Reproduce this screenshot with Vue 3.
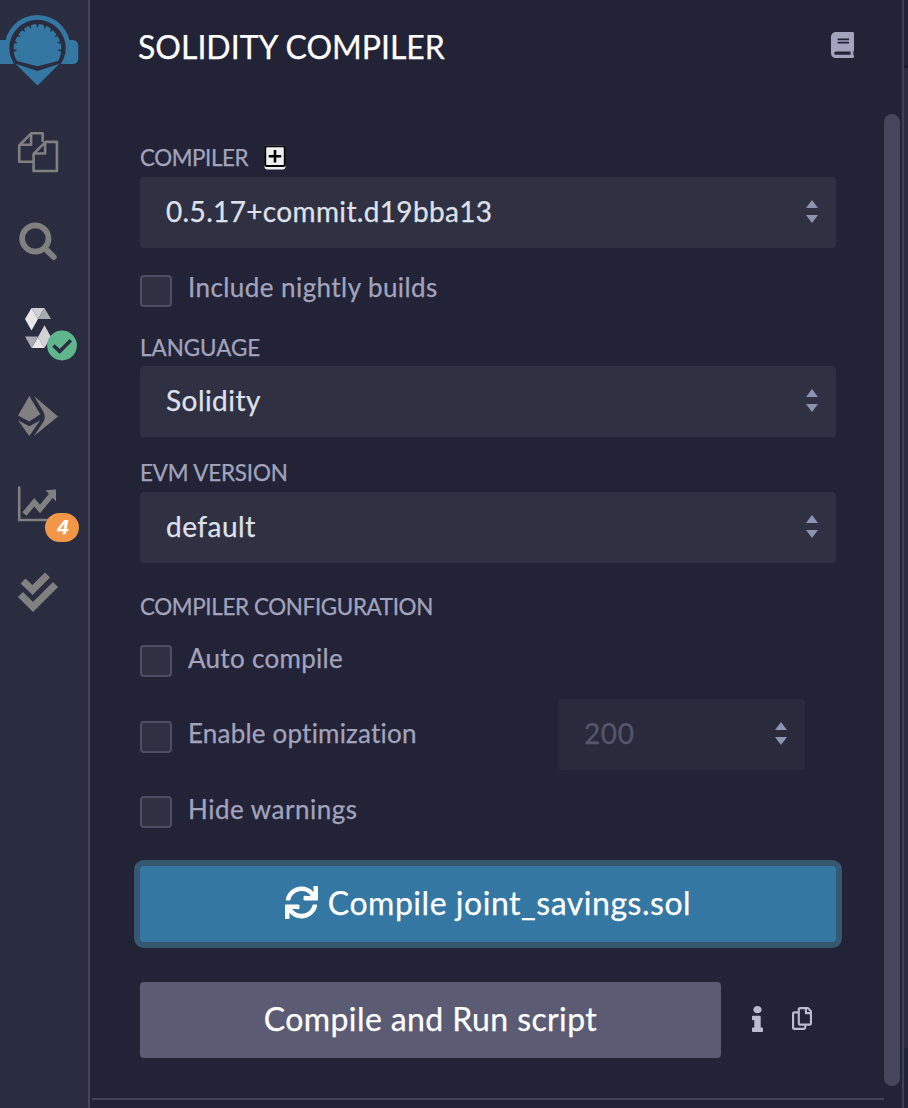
<script setup>
import { ref } from 'vue'

const compiler = ref('0.5.17+commit.d19bba13')
const language = ref('Solidity')
const evm = ref('default')
const runs = ref(200)
const notches = [-96, -76, -57, -38, -19, 0, 19, 38, 57, 76, 96].map((a) => a + 0)
</script>

<template>
  <div class="app">
    <nav class="rail">
      <svg class="logo" viewBox="0 0 88 108">
        <circle cx="37.5" cy="48" r="33" fill="#3477a2" />
        <path d="M0 64H88V90H0Z" fill="#2a2c3f" />
        <g fill="#3477a2">
          <rect x="-6" y="40" width="20" height="24" rx="5" />
          <rect x="61" y="40" width="17.3" height="24" rx="5.5" />
        </g>
        <circle cx="37.5" cy="48" r="28.2" fill="#2a2c3f" />
        <path d="M17 61C12.500 54 12.500 45 16.500 38C21 29 29 24 37.500 24S54 29 58.500 38C62.500 45 62.500 54 58 61L37.500 66.300Z" fill="#3477a2" />
        <path v-for="a in notches" :key="a" d="M35.500 22.500L37.500 27.800L39.500 22.500Z" :transform="`rotate(${a} 37.5 48)`" fill="#2a2c3f" />
        <path d="M15.500 63.800L37.500 71L59.500 63.800L37.500 85.500Z" fill="#3477a2" />
      </svg>
      <svg viewBox="0 108 88 88" fill="none" stroke="#808080" stroke-width="2.600" stroke-linejoin="round">
        <path d="M33.500 161.700H19.200V145.500L31.500 133.200H42.600V142M31.100 133.500V144.800H19.500" />
        <path d="M45.500 141.900H56.900V171H33.600V153.800ZM45.100 142V153.500H34" />
      </svg>
      <svg viewBox="0 196 88 88" fill="none" stroke="#808080">
        <circle cx="35.300" cy="238.500" r="13.200" stroke-width="5.700" />
        <path d="M45 248.300L53.700 257" stroke-width="6" stroke-linecap="round" />
      </svg>
      <svg viewBox="0 284 88 88">
        <path d="M31.500 308L38 319L31.500 330.500L25 319Z" fill="#e7e7e9" />
        <path d="M31.500 308H44.500L38 319Z" fill="#d0d0d4" />
        <path d="M44.500 308L51 319H38Z" fill="#a9a9b2" />
        <path d="M44.500 348L38 337L44.500 325.300L51 337Z" fill="#d3d3d6" />
        <path d="M44.500 348H31.500L38 337Z" fill="#e7e7e9" />
        <path d="M31.500 348L25 336.500H38Z" fill="#a9a9b2" />
        <circle cx="62" cy="345.500" r="14.900" fill="#5fb58c" />
        <path d="M53.500 345.500L59.700 351.400L70.800 340.300" fill="none" stroke="#2a2c3f" stroke-width="3.600" />
      </svg>
      <svg viewBox="0 372 88 88" fill="#808080">
        <path d="M29.300 396L40.300 414.300L29.300 421.500L18 415.500Z" />
        <path d="M18 420.200L29.300 426.300L40.300 420.200L29.300 436Z" />
        <path d="M34 396L58 416.500L34 436L43.500 421.500Q46 417 43.500 412Z" />
      </svg>
      <div class="slot">
        <svg viewBox="0 460 88 88" fill="none" stroke="#808080">
          <path d="M19.200 486.500V520H50" stroke-width="2.500" />
          <path d="M24.500 514L34.300 502.300L40 509L51.500 495" stroke-width="5.500" />
          <path d="M45.500 490.200L56 489.500V501.500Z" fill="#808080" stroke="none" />
        </svg>
        <span class="count">4</span>
      </div>
      <svg viewBox="0 548 88 88" fill="none" stroke="#808080" stroke-width="7.200" stroke-linejoin="miter">
        <path d="M23 581L32.500 590L47.500 575" />
        <path d="M20.500 594.500L33 607L55.500 584.500" />
      </svg>
    </nav>

    <main class="panel">
      <header>
        <h1>SOLIDITY COMPILER</h1>
        <svg class="book" viewBox="0 0 448 512" preserveAspectRatio="none"><path d="M448 360V24c0-13.300-10.700-24-24-24H96C43 0 0 43 0 96v320c0 53 43 96 96 96h328c13.300 0 24-10.700 24-24v-16c0-7.500-3.500-14.300-8.900-18.700-4.200-15.400-4.200-59.300 0-74.700 5.400-4.300 8.900-11.100 8.900-18.600zM128 134c0-3.300 2.700-6 6-6h212c3.300 0 6 2.700 6 6v20c0 3.300-2.700 6-6 6H134c-3.300 0-6-2.700-6-6v-20zm0 64c0-3.300 2.700-6 6-6h212c3.300 0 6 2.700 6 6v20c0 3.300-2.700 6-6 6H134c-3.300 0-6-2.700-6-6v-20zm253.400 250H96c-17.700 0-32-14.300-32-32 0-17.600 14.400-32 32-32h285.400c-1.900 17.100-1.900 46.900 0 64z" /></svg>
      </header>

      <div class="body">
        <section class="form">
          <div class="label first">
            <span class="l1">COMPILER</span>
            <svg class="plus" viewBox="0 0 22 25">
              <rect x="0.500" y="0" width="21" height="24.500" rx="3" fill="#efefef" />
              <rect x="1.200" y="1.300" width="19.600" height="19.600" rx="1.500" fill="#efefef" stroke="#000" stroke-width="2" />
              <path d="M11 5V17.500M4.700 11.200H17.300" stroke="#000" stroke-width="2.600" />
            </svg>
          </div>
          <div class="select"><span class="v1">{{ compiler }}</span><i class="arrows"></i></div>
          <label class="check nightly"><i></i><span class="c1">Include nightly builds</span></label>
          <div class="label language"><span class="l2">LANGUAGE</span></div>
          <div class="select"><span class="v2">{{ language }}</span><i class="arrows"></i></div>
          <div class="label evm"><span class="l3">EVM VERSION</span></div>
          <div class="select"><span class="v3">{{ evm }}</span><i class="arrows"></i></div>
          <div class="label config"><span class="l4">COMPILER CONFIGURATION</span></div>
          <label class="check auto"><i></i><span class="c2">Auto compile</span></label>
          <div class="optimize">
            <label class="check"><i></i><span class="c3">Enable optimization</span></label>
            <div class="select runs"><span class="v4">{{ runs }}</span><i class="arrows"></i></div>
          </div>
          <label class="check hide"><i></i><span class="c4">Hide warnings</span></label>
          <button class="primary">
            <svg viewBox="0 0 512 512"><path d="M440.650 12.570l4 82.770A247.160 247.160 0 0 0 255.830 8C134.730 8 33.910 94.920 12.290 209.820A12 12 0 0 0 24.090 224h49.050a12 12 0 0 0 11.670-9.260 175.910 175.910 0 0 1 317-56.940l-101.460-4.860a12 12 0 0 0-12.570 12v47.410a12 12 0 0 0 12 12H500a12 12 0 0 0 12-12V12a12 12 0 0 0-12-12h-47.370a12 12 0 0 0-11.980 12.570zM255.830 432a175.610 175.610 0 0 1-146-77.800l101.800 4.870a12 12 0 0 0 12.570-12v-47.400a12 12 0 0 0-12-12H12a12 12 0 0 0-12 12V500a12 12 0 0 0 12 12h47.350a12 12 0 0 0 12-12.600l-4.150-82.570A247.170 247.170 0 0 0 255.830 504c121.110 0 221.930-86.920 243.550-201.820a12 12 0 0 0-11.800-14.180h-49.050a12 12 0 0 0-11.670 9.260A175.860 175.860 0 0 1 255.830 432z" /></svg>
            <span class="b1">Compile joint_savings.sol</span>
          </button>
          <div class="run">
            <button class="secondary"><span class="b2">Compile and Run script</span></button>
            <svg class="info" viewBox="0 0 192 512" preserveAspectRatio="none"><path d="M20 424.229h20V279.771H20c-11.046 0-20-8.954-20-20V212c0-11.046 8.954-20 20-20h112c11.046 0 20 8.954 20 20v212.229h20c11.046 0 20 8.954 20 20V492c0 11.046-8.954 20-20 20H20c-11.046 0-20-8.954-20-20v-47.771c0-11.046 8.954-20 20-20zM96 0C56.235 0 24 32.235 24 72s32.235 72 72 72 72-32.235 72-72S135.764 0 96 0z" /></svg>
            <svg class="copy" viewBox="0 0 448 512"><path d="M433.941 65.941l-51.882-51.882A48 48 0 0 0 348.118 0H176c-26.510 0-48 21.490-48 48v48H48c-26.510 0-48 21.490-48 48v320c0 26.510 21.490 48 48 48h224c26.510 0 48-21.490 48-48v-48h80c26.510 0 48-21.490 48-48V99.882a48 48 0 0 0-14.059-33.941zM266 464H54a6 6 0 0 1-6-6V150a6 6 0 0 1 6-6h74v224c0 26.510 21.490 48 48 48h96v42a6 6 0 0 1-6 6zm128-96H182a6 6 0 0 1-6-6V54a6 6 0 0 1 6-6h106v88c0 13.255 10.745 24 24 24h88v202a6 6 0 0 1-6 6zm6-256h-64V48h9.632c1.591 0 3.117.632 4.243 1.757l48.368 48.368a6 6 0 0 1 1.757 4.243V112z" /></svg>
          </div>
          <hr />
        </section>
        <div class="scroll"></div>
      </div>
    </main>
    <aside class="edge"></aside>
  </div>
</template>

<style>
body {
  margin: 0;
  background: #222336;
}
</style>

<style scoped>
.app {
  display: flex;
  width: 908px;
  height: 1108px;
  overflow: hidden;
  background: #222336;
  color: #a2a3bd;
  font-family: Lato, "Noto Sans", sans-serif;
  font-variant-ligatures: none;
  -webkit-text-stroke: 0.25px currentColor;
}
.app * { box-sizing: border-box; }
span, h1 { white-space: nowrap; }
.rail {
  width: 90px;
  flex: none;
  background: #2a2c3f;
  border-right: 2px solid #444559;
}
.rail svg { display: block; width: 88px; height: 88px; }
.rail .logo { height: 108px; }
.slot { position: relative; height: 88px; }
.count {
  position: absolute;
  left: 45px;
  top: 53px;
  width: 34px;
  height: 29px;
  border-radius: 15px;
  background: #f19747;
  color: #fff;
  font: italic bold 20px/28px "Liberation Sans", sans-serif;
  text-align: center;
  padding-left: 2px;
}
.panel {
  display: flex;
  flex-direction: column;
  width: 814px;
  flex: none;
  border-right: 2px solid #3f4054;
}
header {
  height: 114px;
  flex: none;
  display: flex;
  justify-content: space-between;
  padding: 28px 48px 0 48px;
}
h1 { margin: 0; font-size: 32px; line-height: 38px; font-weight: 400; color: #fff; }
.book { width: 23px; height: 26px; margin-top: 4px; fill: #a2a3bd; }
.body { flex: 1; display: flex; }
.form {
  width: 794px;
  padding: 23px 48px 0 50px;
  display: flex;
  flex-direction: column;
}
.label { height: 39px; flex: none; display: flex; align-items: center; font-size: 22.4px; }
.label.first { height: 40px; }
.plus { width: 22px; height: 25px; margin-left: 16px; }
.label.language { padding-top: 2px; }
.label.evm { height: 55px; padding-top: 15px; }
.label.config { height: 63px; padding-top: 23px; }
.select {
  height: 71px;
  flex: none;
  border-radius: 4px;
  background: #2f3042;
  color: #dfe1ea;
  font-size: 28px;
  display: flex;
  align-items: center;
  justify-content: space-between;
  padding: 0 18px 3px 26px;
}
.arrows {
  width: 12px;
  height: 23px;
  display: flex;
  flex-direction: column;
  justify-content: space-between;
}
.arrows::before, .arrows::after { content: ""; border: 6px solid transparent; }
.arrows::before { border-top: 0; border-bottom: 8px solid #8d94b2; }
.arrows::after { border-bottom: 0; border-top: 8px solid #8d94b2; }
.check { display: flex; flex: none; font-size: 26px; line-height: 32px; }
.check i {
  width: 32px;
  height: 32px;
  border: 2px solid #4d4e64;
  border-radius: 4px;
  background: #2f3042;
  margin-right: 16px;
}
.check span { margin-top: -4px; height: 32px; }
.nightly { height: 79px; padding-top: 27px; }
.auto { height: 73px; padding-top: 19px; }
.auto span, .hide span { margin-top: -3px; }
.optimize { display: flex; justify-content: space-between; height: 71px; padding-right: 31px; }
.optimize .check { padding-top: 22px; }
.runs { width: 247px; background: #292a3c; color: #55566b; }
.hide { height: 96px; padding-top: 26px; }
button {
  height: 76px;
  flex: none;
  border: 0;
  border-radius: 4px;
  padding: 0 0 4px;
  color: #fff;
  font-family: inherit;
  font-size: 32px;
  display: flex;
  align-items: center;
  justify-content: center;
}
.primary { background: #3477a2; box-shadow: 0 0 0 6px #355870; }
.primary svg { width: 33px; height: 33px; fill: #fff; margin: 0 10px 0 0; }
.run { display: flex; align-items: center; margin-top: 40px; }
.secondary { width: 581px; background: #5b5c74; }
.info { width: 11px; height: 26px; margin: -3px 0 0 31px; fill: #bbbcd0; }
.copy { width: 20px; height: 23px; margin: -3px 0 0 29px; fill: #bbbcd0; }
.l1 { letter-spacing: -0.42px; }
.l2 { letter-spacing: 0; }
.l3 { letter-spacing: -0.15px; }
.l4 { letter-spacing: -0.36px; }
.v1 { letter-spacing: 0.35px; }
.v2 { letter-spacing: 0.45px; }
.v3 { letter-spacing: 0.5px; }
.v4 { letter-spacing: 0.6px; }
.c1 { letter-spacing: 0.43px; }
.c2 { letter-spacing: 0.3px; }
.c3 { letter-spacing: 0.2px; }
.c4 { letter-spacing: 0.5px; }
.b1 { letter-spacing: 0.53px; }
.b2 { letter-spacing: 0.4px; }
hr { width: 792px; flex: none; height: 2px; border: 0; margin: 40px 0 0 -48px; background: #404155; }
.scroll { width: 16px; height: 972px; border-radius: 8px; background: #44465b; }
.edge { flex: 1; background: linear-gradient(#222336 0 65px, #1b1c2b 65px 68px, #2a2c3f 68px 1048px, #222336 1048px); }
</style>
